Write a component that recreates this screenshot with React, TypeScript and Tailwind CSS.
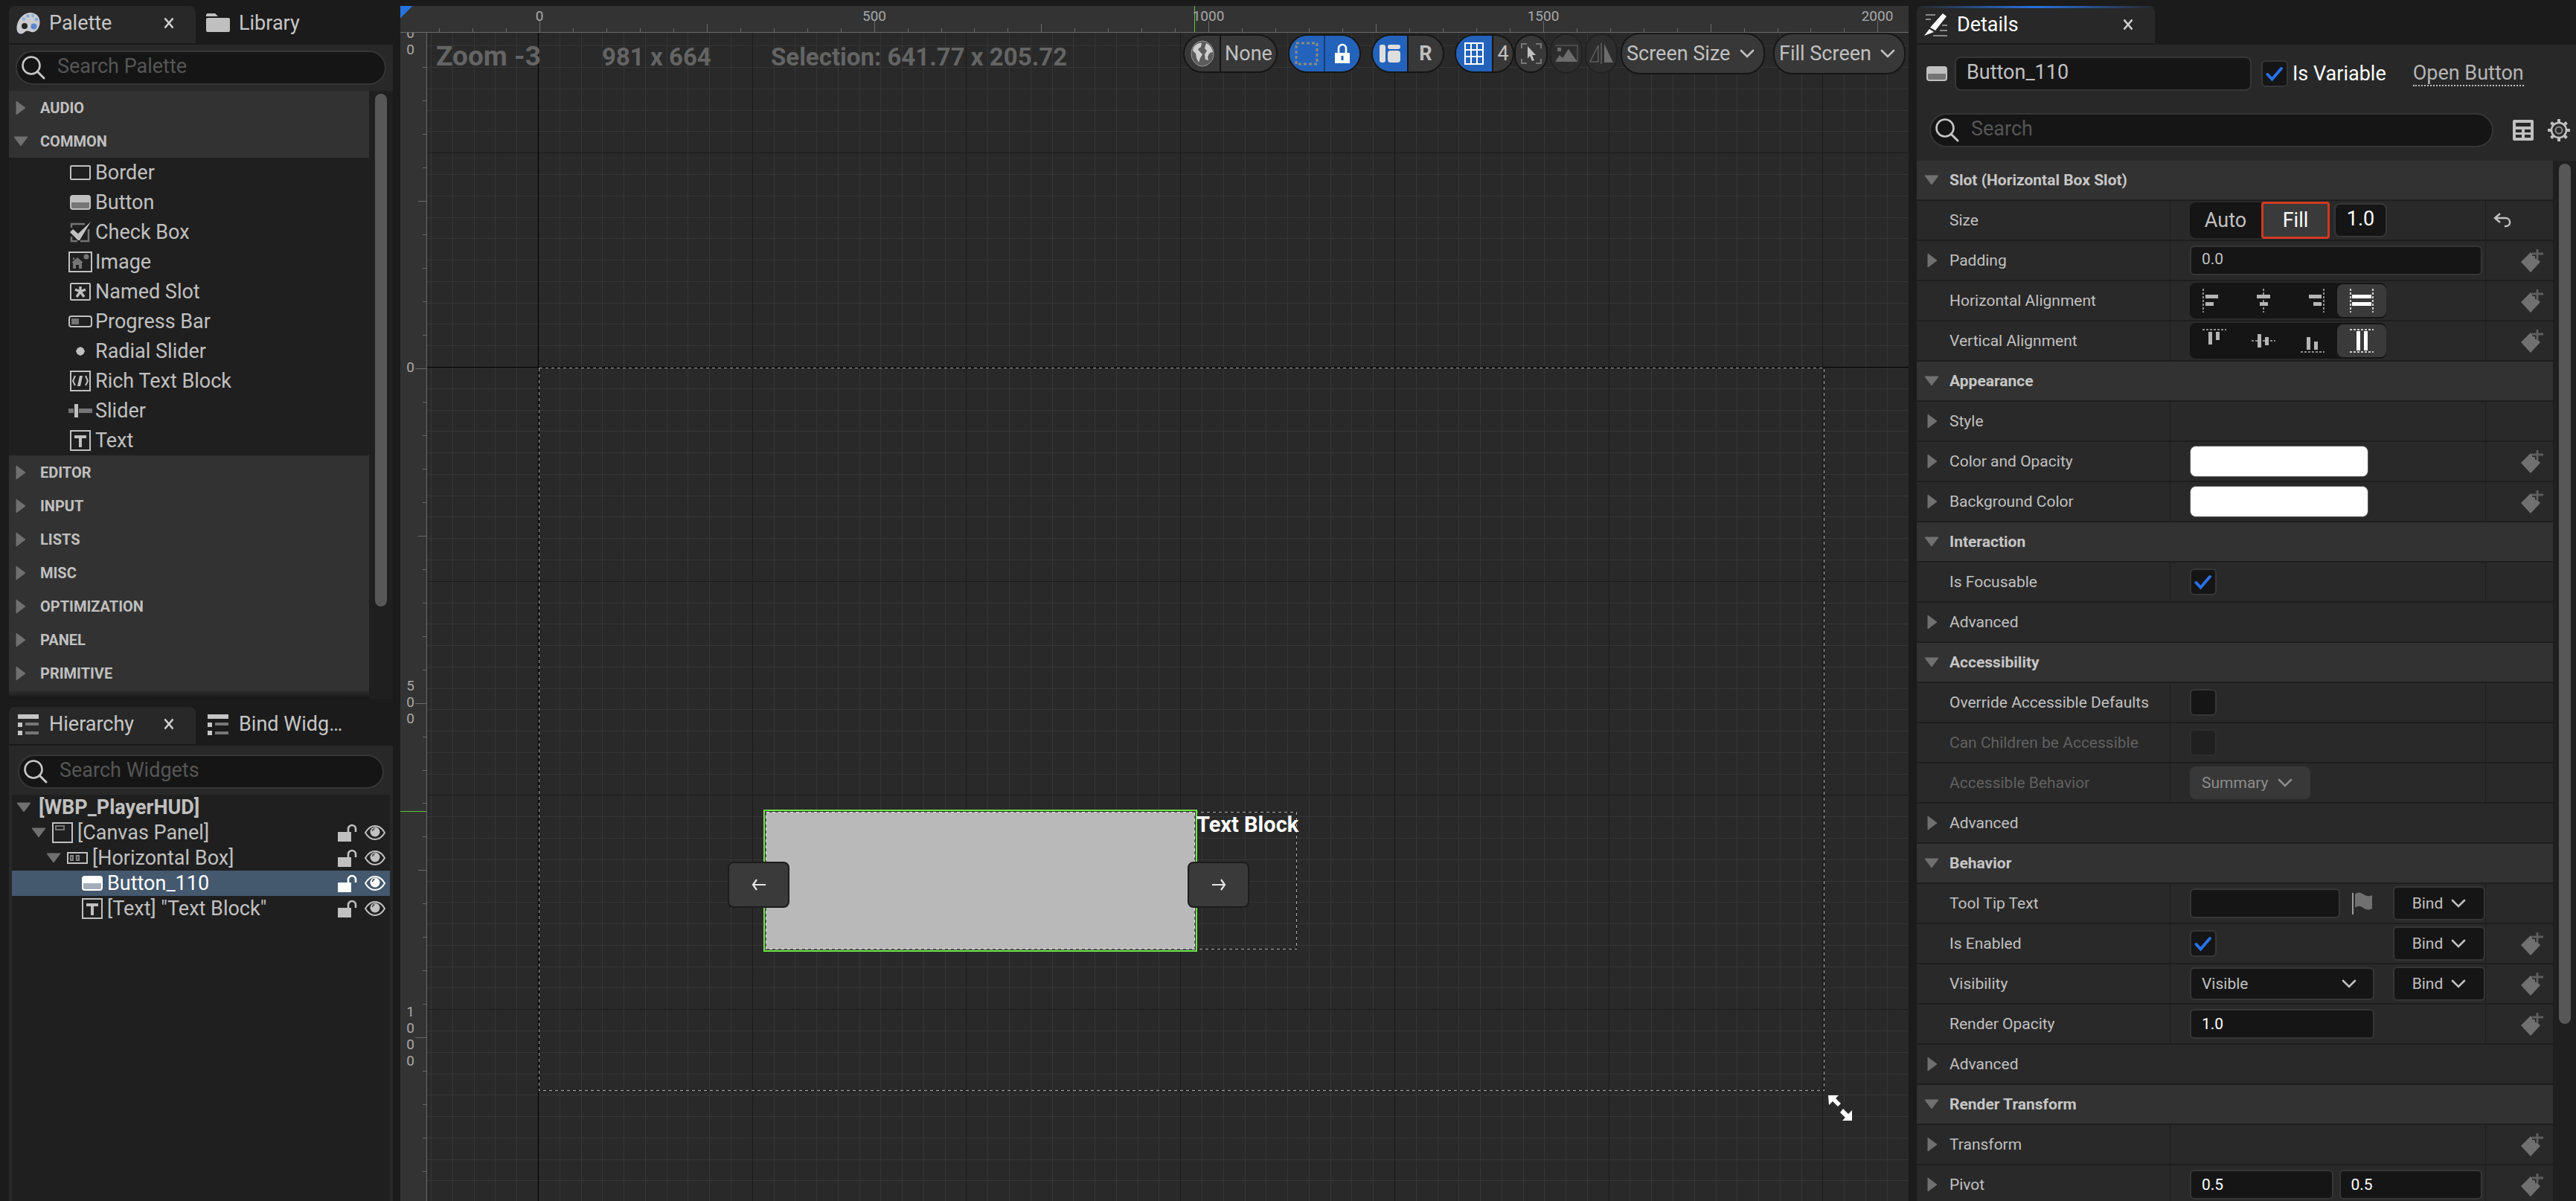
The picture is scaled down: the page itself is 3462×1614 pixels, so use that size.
import type { ReactNode } from "react";
import clsx from "clsx";

const UNIT = 0.8992; // pixels per slate unit at zoom -3
const MINOR = 50 * UNIT;
const CELL = 32 * UNIT;

function range(from: number, to: number) {
  return Array.from({ length: to - from + 1 }, (_, i) => from + i);
}

/* ---------- icons ---------- */

interface IconProps {
  className?: string;
  box?: string;
  children?: ReactNode;
}

function Icon({ className = "h-8 w-8", box = "0 0 32 32", children }: IconProps) {
  return (
    <svg className={clsx("shrink-0", className)} viewBox={box} fill="none" aria-hidden="true">
      {children}
    </svg>
  );
}

function SearchIcon() {
  return (
    <Icon>
      <circle cx="13" cy="13" r="11.5" stroke="#c6c6c6" strokeWidth="2.6" />
      <path d="M21 21l9 9" stroke="#c6c6c6" strokeWidth="3" strokeLinecap="round" />
    </Icon>
  );
}

function PaletteIcon() {
  return (
    <Icon>
      <path
        d="M19 2C9 2 1 12 .5 22c-.3 5 2 9 6 8.500 4-.5 5-4 8-4 3.500 0 5 2.500 9 1.500 5-1.500 8-7 8-13C31.500 7 26 2 19 2z"
        fill="#c9cbd0"
      />
      <circle cx="11" cy="20" r="4" fill="#262626" />
      <circle cx="23.5" cy="20.5" r="4" fill="#5b86cc" />
      <circle cx="10" cy="10.5" r="2.2" fill="#8fb2d6" />
      <circle cx="15.5" cy="6.5" r="2.2" fill="#7fa8d8" />
      <circle cx="22" cy="6" r="2.2" fill="#8fb2d6" />
      <circle cx="27" cy="11" r="2.2" fill="#7fa8d8" />
    </Icon>
  );
}

function FolderIcon() {
  return (
    <Icon>
      <path d="M0 4.500L1.500 3H12l4 4H0z" fill="#c0c0c0" />
      <rect y="9" width="32" height="19" rx="2" fill="#c0c0c0" />
    </Icon>
  );
}

function ListIcon() {
  return (
    <Icon>
      <path d="M2 3h28v6H2zM2 14h6v6H2zM2 25h6v6H2z" fill="#c6c6c6" />
      <path d="M12 14h18v4H12zM12 26h18v4H12z" fill="#777" />
    </Icon>
  );
}

function DetailsIcon() {
  return (
    <Icon>
      <path d="M2 3h13M2 9h7M24 17h7M21 24h10M12 31h19" stroke="#8a8a8a" strokeWidth="2" />
      <path d="M25 1l5 4-15 19-7-4zM7 22l6 4L0 31z" fill="#fff" />
    </Icon>
  );
}

function CloseButton({ label }: { label: string }) {
  return (
    <button type="button" aria-label={label} className="flex h-6 w-6 items-center justify-center">
      <Icon className="h-4 w-4" box="0 0 16 16">
        <path d="M2.500 1.500l11 13M13.500 1.500l-11 13" stroke="#d0d0d0" strokeWidth="2.6" />
      </Icon>
    </button>
  );
}

function ArrowDown() {
  return (
    <Icon className="h-[14px] w-5" box="0 0 20 14">
      <path d="M1 1h18l-9 12z" fill="#707070" stroke="#707070" strokeLinejoin="round" />
    </Icon>
  );
}

function ArrowRight() {
  return (
    <Icon className="h-5 w-[14px]" box="0 0 14 20">
      <path d="M1 1v18l12-9z" fill="#707070" stroke="#707070" strokeLinejoin="round" />
    </Icon>
  );
}

function Chevron({ color = "#c0c0c0" }: { color?: string }) {
  return (
    <Icon className="pointer-events-none h-5 w-5" box="0 0 20 20">
      <path d="M2 6l8 8 8-8" stroke={color} strokeWidth="2.6" strokeLinecap="round" />
    </Icon>
  );
}

function ButtonGlyph({ color = "#c0c0c0", shade = "#757575" }: { color?: string; shade?: string }) {
  return (
    <Icon>
      <rect x="2" y="6" width="28" height="20" rx="4" fill={color} />
      <path d="M4 16h24v6a2 2 0 01-2 2H6a2 2 0 01-2-2z" fill={shade} />
    </Icon>
  );
}

function TextGlyph() {
  return (
    <Icon>
      <path d="M3 3h26v26H3z" stroke="#c0c0c0" strokeWidth="2" />
      <path d="M8 9h16v4h-6v12h-4V13H8z" fill="#c0c0c0" />
    </Icon>
  );
}

const glyphs: Record<string, ReactNode> = {
  Border: (
    <Icon>
      <rect x="3" y="7" width="26" height="18" rx="1" stroke="#c0c0c0" strokeWidth="2" />
    </Icon>
  ),
  Button: <ButtonGlyph />,
  "Check Box": (
    <Icon>
      <path d="M22 5H4v5M4 22v6h8M16 28h11V12" stroke="#757575" strokeWidth="2.5" />
      <path d="M2 16l4-4 7 6L30 2 15 27h-2z" fill="#c0c0c0" />
    </Icon>
  ),
  Image: (
    <Icon>
      <path d="M1 3h30v26H1z" stroke="#c0c0c0" strokeWidth="2" />
      <path d="M4 17l8-7 8 7h-2v8h-4v-5h-4v5H6v-8zM6 10h2v3H6z" fill="#757575" />
      <circle cx="24" cy="9" r="3.5" fill="#757575" />
    </Icon>
  ),
  "Named Slot": (
    <Icon>
      <rect x="3" y="5" width="26" height="22" rx="1" stroke="#c0c0c0" strokeWidth="2" />
      <path d="M16 9v7M9 13l7 3 7-3M11 23l5-7 5 7" stroke="#c0c0c0" strokeWidth="3.4" />
    </Icon>
  ),
  "Progress Bar": (
    <Icon>
      <rect x="1" y="9" width="30" height="14" rx="3" stroke="#c0c0c0" strokeWidth="2" />
      <path d="M4 12h10v8H4z" fill="#757575" />
    </Icon>
  ),
  "Radial Slider": (
    <Icon>
      <path d="M16 10l4 2 2 4-2 4-4 2-4-2-2-4 2-4z" fill="#c0c0c0" />
    </Icon>
  ),
  "Rich Text Block": (
    <Icon>
      <path d="M3 3h26v26H3z" stroke="#c0c0c0" strokeWidth="2" />
      <path d="M9 9l-3 7 3 6M23 9l3 7-3 6" stroke="#c0c0c0" strokeWidth="2" />
      <path d="M15 9h4l-3 14h-4z" fill="#c0c0c0" />
    </Icon>
  ),
  Slider: (
    <Icon>
      <path d="M0 13h7v6H0zM14 13h18v6H14z" fill="#757575" />
      <path d="M8 7h5v18H8z" fill="#c0c0c0" />
    </Icon>
  ),
  Text: <TextGlyph />,
};

function LockOpen({ color }: { color: string }) {
  return (
    <Icon className="h-6 w-7" box="0 0 28 24">
      <path d="M1 11h18v13H1z" fill={color} />
      <path d="M15 11V7a5 5 0 0110 0v4" stroke={color} strokeWidth="2.6" />
    </Icon>
  );
}

function Eye({ color }: { color: string }) {
  return (
    <Icon className="h-6 w-7" box="0 0 28 24">
      <path d="M1 12c7-12 19-12 26 0-7 12-19 12-26 0z" stroke={color} strokeWidth="2" />
      <circle cx="14" cy="11" r="6.5" fill={color} />
      <path d="M10.500 10a4 4 0 013-3.500" stroke="#444" strokeWidth="1.4" />
    </Icon>
  );
}

/* ---------- shared pieces ---------- */

function Tab({ icon, title, active }: { icon: ReactNode; title: string; active?: boolean }) {
  return (
    <div
      className={clsx(
        "flex h-[50px] items-center rounded-t-lg pb-1",
        active ? "w-[251px] bg-[#282828] pl-[10px]" : "flex-1 pl-[14px]"
      )}
    >
      {icon}
      <span className="ml-3 flex-1 text-[27px] leading-8 text-[#c6c6c6]">{title}</span>
      {active && (
        <span className="mr-6 flex">
          <CloseButton label={"Close " + title} />
        </span>
      )}
    </div>
  );
}

function SearchBox({ label, className }: { label: string; className?: string }) {
  return (
    <label
      className={clsx(
        "flex items-center rounded-full border-2 border-[#363636] bg-[#151515] pl-[6px]",
        className
      )}
    >
      <SearchIcon />
      <input
        type="search"
        placeholder={label}
        aria-label={label}
        className="ml-4 w-full min-w-0 bg-transparent pb-1 text-[27px] leading-8 text-[#c0c0c0] outline-none placeholder:text-[#555]"
      />
    </label>
  );
}

/* ---------- left column ---------- */

const lowerCategories = ["EDITOR", "INPUT", "LISTS", "MISC", "OPTIMIZATION", "PANEL", "PRIMITIVE"];

function Category({ name, open }: { name: string; open?: boolean }) {
  return (
    <button type="button" className="flex h-[45px] w-full shrink-0 items-center bg-[#323232]">
      <span className={clsx("flex w-[42px]", open ? "pl-[6px]" : "pl-[9px]")}>
        {open ? <ArrowDown /> : <ArrowRight />}
      </span>
      <span className="text-[20px] leading-6 font-bold text-[#c0c0c0]">{name}</span>
    </button>
  );
}

function PalettePanel() {
  return (
    <section className="flex shrink-0 basis-[931px] flex-col overflow-hidden">
      <div className="flex">
        <Tab icon={<PaletteIcon />} title="Palette" active />
        <Tab icon={<FolderIcon />} title="Library" />
      </div>
      <div className="mt-[2px] bg-[#282828] px-[9px] py-2">
        <SearchBox label="Search Palette" className="h-[46px]" />
      </div>
      <div className="flex min-h-0 flex-1 bg-[#1f1f1f]">
        <div className="flex flex-1 flex-col overflow-hidden">
          <Category name="AUDIO" />
          <Category name="COMMON" open />
          <ul>
            {Object.keys(glyphs).map((name) => (
              <li key={name} className="flex h-10 items-center gap-1 pl-20 text-[27px] leading-8 text-[#c0c0c0]">
                {glyphs[name]}
                {name}
              </li>
            ))}
          </ul>
          {lowerCategories.map((name) => (
            <Category key={name} name={name} />
          ))}
          <div className="flex-1 bg-linear-to-b from-[#323232] to-[#161616]" />
        </div>
        <div className="w-8 px-2 pt-1">
          <div className="h-[689px] w-4 rounded-full bg-[#575757]" />
        </div>
      </div>
    </section>
  );
}

interface TreeRowProps {
  indent: string;
  name: string;
  icon?: ReactNode;
  open?: boolean;
  selected?: boolean;
  root?: boolean;
}

function TreeRow({ indent, name, icon, open, selected, root }: TreeRowProps) {
  const color = selected ? "#ffffff" : "#c0c0c0";
  return (
    <li
      className={clsx(
        "flex h-[34px] items-center pr-[6px] text-[27px] leading-8",
        indent,
        selected ? "bg-[#44586e] text-white" : "text-[#c0c0c0]"
      )}
    >
      <span className="flex w-[26px] shrink-0">{open && <ArrowDown />}</span>
      {icon}
      <span className={clsx("flex-1 pl-1 whitespace-nowrap", root && "font-bold")}>{name}</span>
      {!root && (
        <span className="flex gap-[9px]">
          <button type="button" aria-label={"Lock " + name}>
            <LockOpen color={color} />
          </button>
          <button type="button" aria-label={"Toggle visibility of " + name}>
            <Eye color={color} />
          </button>
        </span>
      )}
    </li>
  );
}

function HierarchyPanel() {
  return (
    <section className="flex min-h-0 flex-1 flex-col">
      <div className="flex">
        <Tab icon={<ListIcon />} title="Hierarchy" active />
        <Tab icon={<ListIcon />} title="Bind Widg…" />
      </div>
      <div className="mt-[2px] flex flex-1 flex-col bg-[#282828] px-1 pt-3">
        <SearchBox label="Search Widgets" className="mx-2 h-[46px]" />
        <ul className="mt-2 flex-1 bg-[#1f1f1f]">
          <TreeRow indent="pl-[6px]" name="[WBP_PlayerHUD]" open root />
          <TreeRow
            indent="pl-[26px]"
            name="[Canvas Panel]"
            open
            icon={
              <Icon>
                <path d="M3 3h26v26H3z" stroke="#c0c0c0" strokeWidth="2" />
                <path d="M7 7h11v5H7z" stroke="#757575" strokeWidth="2" />
              </Icon>
            }
          />
          <TreeRow
            indent="pl-[46px]"
            name="[Horizontal Box]"
            open
            icon={
              <Icon>
                <path d="M3 9h26v14H3z" stroke="#c0c0c0" strokeWidth="2" />
                <path d="M7 13h3v6H7zM15 13h3v6h-3z" stroke="#858585" strokeWidth="2" />
              </Icon>
            }
          />
          <TreeRow
            indent="pl-[66px]"
            name="Button_110"
            selected
            icon={<ButtonGlyph color="#ffffff" shade="#a3adba" />}
          />
          <TreeRow indent="pl-[66px]" name={'[Text] "Text Block"'} icon={<TextGlyph />} />
        </ul>
      </div>
    </section>
  );
}

/* ---------- designer ---------- */

function tickSize(i: number) {
  if (i % 10 === 0) return 15;
  return i % 5 === 0 ? 11 : 5;
}

function TopRuler() {
  return (
    <div className="relative col-span-2 overflow-hidden border-b border-[#6a6a6a] bg-[#333]">
      <svg className="absolute h-full w-full" shapeRendering="crispEdges" aria-hidden="true">
        <path d="M0 0h16L0 16z" fill="#2872e0" />
        {range(-3, 60).map((i) => {
          const x = Math.round(187 + i * MINOR);
          return <path key={i} d={`M${x}.5 ${35 - tickSize(i)}V35`} stroke="#6a6a6a" />;
        })}
        <path d="M1067.500 0V35" stroke="#5ac83a" />
      </svg>
      {[0, 500, 1000, 1500, 2000].map((n) => (
        <span
          key={n}
          className="absolute top-1 w-16 -translate-x-1/2 text-center text-[19px] leading-5 text-[#a8a8a8]"
          style={{ left: Math.round(187 + n * UNIT) }}
        >
          {n}
        </span>
      ))}
    </div>
  );
}

const sideLabels = [
  { digits: "00", y: 12 },
  { digits: "0", y: 450 },
  { digits: "500", y: 900 },
  { digits: "1000", y: 1349 },
];

function SideRuler() {
  return (
    <div className="relative overflow-hidden border-r border-[#6a6a6a] bg-[#333]">
      <svg className="absolute h-full w-full" shapeRendering="crispEdges" aria-hidden="true">
        {range(-9, 40).map((i) => {
          const y = Math.round(451 + i * MINOR);
          return <path key={i} d={`M${35 - tickSize(i)} ${y}.5H35`} stroke="#6a6a6a" />;
        })}
        <path d="M0 1046.500H35" stroke="#5ac83a" />
      </svg>
      {sideLabels.map(({ digits, y }) => (
        <div
          key={y}
          className="absolute left-2 w-[11px] -translate-y-1/2 text-center text-[19px] leading-[22px] text-[#a8a8a8]"
          style={{ top: y }}
        >
          {digits.split("").map((digit, i) => (
            <div key={i}>{digit}</div>
          ))}
        </div>
      ))}
    </div>
  );
}

function GridLines() {
  const stroke = (i: number) => (i === 0 ? "#000" : i % 10 === 0 ? "#1b1b1b" : "#363636");
  // majors go last so they stay on top of the minor lines
  const order = (a: number, b: number) => Number(a % 10 === 0) - Number(b % 10 === 0);
  return (
    <svg className="absolute h-full w-full" shapeRendering="crispEdges" fill="none" aria-hidden="true">
      {range(-15, 90).sort(order).map((i) => (
        <g key={i} stroke={stroke(i)}>
          <path d={`M${Math.round(149 + i * CELL)}.5 0V4000`} />
          <path d={`M0 ${Math.round(449 + i * CELL)}.5H6000`} />
        </g>
      ))}
      {[
        [150, 450, 1727, 971],
        [455, 1047, 713, 184],
      ].map(([x, y, w, h]) => (
        <g key={x}>
          <rect x={x + 0.5} y={y + 0.5} width={w} height={h} stroke="#161616" />
          <rect x={x + 0.5} y={y + 0.5} width={w} height={h} stroke="#a9a9a9" strokeDasharray="4 4" />
        </g>
      ))}
    </svg>
  );
}

const pill = "flex overflow-hidden rounded-[26px] border-2 border-[#161616] bg-[#383838]";
const cell = "flex flex-1 items-center justify-center";

function Toolbar() {
  return (
    <div className="absolute top-0 right-1 flex items-center text-[27px] leading-8 text-[#c0c0c0]">
      <div className={clsx(pill, "mr-[14px] h-[52px] w-[127px]")}>
        <button
          type="button"
          aria-label="Localization preview"
          className="flex w-[49px] items-center justify-center border-r-2 border-[#161616]"
        >
          <Icon className="h-9 w-8" box="0 0 32 36">
            <ellipse cx="16" cy="18" rx="15" ry="17" fill="#5c5c5c" stroke="#9a9a9a" />
            <path
              d="M4 10c3-5 8-7 11-6l-1 5-4 3 3 4 3 3-3 5-2 6-3-6-1-6-4-4zM21 4c5 2 8 7 9 12l-4 1-3 5 1 5-4-1-1-7 3-5-3-3z"
              fill="#cfcfcf"
            />
          </Icon>
        </button>
        <button type="button" className={cell}>None</button>
      </div>
      <div className={clsx(pill, "mr-[14px] h-[52px] w-[98px]")}>
        <button type="button" aria-label="Show outlines" className={clsx(cell, "border-r-2 border-[#163c78] bg-[#2463bc]")}>
          <Icon>
            <rect x="2" y="2" width="28" height="28" stroke="#8d8a80" strokeWidth="3" strokeDasharray="4 3" />
          </Icon>
        </button>
        <button type="button" aria-label="Respect locks" className={clsx(cell, "bg-[#2463bc]")}>
          <Icon className="h-7 w-6" box="0 0 24 28">
            <path d="M7 13V7a5 5 0 0110 0v6" stroke="#fff" strokeWidth="2.6" />
            <path fillRule="evenodd" d="M2 13h20v14H2zm8.500 4v6h3v-6z" fill="#fff" />
          </Icon>
        </button>
      </div>
      <div className={clsx(pill, "mr-[14px] h-[52px] w-[98px]")}>
        <button type="button" aria-label="Layout transform" className={clsx(cell, "border-r-2 border-[#161616] bg-[#2463bc]")}>
          <Icon className="h-7 w-8" box="0 0 32 28">
            <rect x="2" y="2" width="8" height="24" rx="3" fill="#dedede" />
            <rect x="13" y="2" width="17" height="6" rx="3" fill="#dedede" />
            <rect x="13" y="10" width="17" height="16" rx="4" fill="#dedede" />
          </Icon>
        </button>
        <button type="button" className={clsx(cell, "font-bold")}>R</button>
      </div>
      <div className={clsx(pill, "h-[52px] w-[80px]")}>
        <button
          type="button"
          aria-label="Grid snapping"
          className="flex w-[50px] items-center justify-center border-r-2 border-[#161616] bg-[#2463bc]"
        >
          <Icon className="h-8 w-7" box="0 0 28 32">
            <path d="M2 2h24v28H2zM10 2v28M18 2v28M2 11h24M2 20h24" stroke="#fff" strokeWidth="2" />
          </Icon>
        </button>
        <button type="button" className={cell}>4</button>
      </div>
      <button type="button" aria-label="Select widget" className={clsx(pill, "h-[52px] w-[45px] items-center justify-center")}>
        <Icon className="h-7 w-7" box="0 0 28 28">
          <path d="M1 7V1h7M20 1h7v6M27 21v6h-7M8 27H1v-6" stroke="#777" strokeWidth="2" />
          <path d="M9 4l11 12h-5l3 7-3 1-3-7-3 4z" fill="#c0c0c0" />
        </Icon>
      </button>
      <button
        type="button"
        disabled
        aria-label="Preview background"
        className="mx-[3px] flex h-[54px] w-11 items-center justify-center rounded-[24px] border-2 border-[#222] bg-[#2d2d2d]"
      >
        <Icon className="h-6 w-8" box="0 0 32 24">
          <path d="M1 1h30v22" stroke="#555" strokeWidth="1.5" />
          <path d="M1 23l6-9 4 4 8-12 12 17zM4 4h5v5H4z" fill="#6c6c6c" />
        </Icon>
      </button>
      <button
        type="button"
        disabled
        aria-label="Flow direction"
        className="flex h-[54px] w-11 items-center justify-center rounded-[24px] border-2 border-[#222] bg-[#2d2d2d]"
      >
        <Icon className="h-7 w-8" box="0 0 32 28">
          <path d="M12 3v22H1zM16 0v28" stroke="#606060" strokeWidth="1.5" />
          <path d="M20 1v25h12z" fill="#6c6c6c" />
        </Icon>
      </button>
      <button
        type="button"
        className={clsx(pill, "ml-1 h-[56px] w-[194px] items-center justify-between pr-3 pl-[6px] whitespace-nowrap")}
      >
        Screen Size
        <Chevron />
      </button>
      <button
        type="button"
        className={clsx(pill, "ml-[11px] h-[56px] w-[178px] items-center justify-between pr-3 pl-[6px] whitespace-nowrap")}
      >
        Fill Screen
        <Chevron />
      </button>
    </div>
  );
}

function SlotArrow({ label, left, children }: { label: string; left?: boolean; children: ReactNode }) {
  return (
    <button
      type="button"
      aria-label={label}
      className={clsx(
        "absolute top-[1114px] flex h-[62px] w-[83px] items-center justify-center rounded-lg border-2 border-[#1c1c1c] bg-[#3a3a3a]",
        left ? "left-[404px]" : "left-[1022px]"
      )}
    >
      <Icon className="h-4 w-5" box="0 0 20 16">
        {children}
      </Icon>
    </button>
  );
}

function SelectedWidget() {
  return (
    <div className="absolute top-[1044px] left-[452px] h-[191px] w-[583px] border-2 border-[#6dea48] bg-[#b9b9b9]">
      <svg className="h-full w-full" fill="none" shapeRendering="crispEdges" aria-hidden="true">
        <rect x="0.5" y="0.5" width="578" height="186" stroke="#333" />
        <rect x="1.5" y="1.5" width="576" height="184" stroke="#666" />
        <rect x="1.5" y="1.5" width="576" height="184" stroke="#eee" strokeDasharray="4 4" />
      </svg>
    </div>
  );
}

function Designer() {
  return (
    <main className="mt-2 grid min-w-0 flex-1 grid-cols-[36px_1fr] grid-rows-[36px_1fr]">
      <TopRuler />
      <SideRuler />
      <div className="relative overflow-hidden bg-[#292929]">
        <GridLines />
        <SelectedWidget />
        <div className="absolute top-[1046px] left-[1034px] text-[29px] leading-9 font-bold whitespace-nowrap text-white">
          Text Block
        </div>
        <SlotArrow label="Move left" left>
          <path d="M19 8H3M7 1L2 8l5 7" stroke="#e6e6e6" strokeWidth="2.2" />
        </SlotArrow>
        <SlotArrow label="Move right">
          <path d="M1 8h16M13 1l5 7-5 7" stroke="#e6e6e6" strokeWidth="2.2" />
        </SlotArrow>
        <div className="absolute top-2 left-3 flex items-baseline font-bold whitespace-nowrap text-[#646464]">
          <span className="w-[223px] text-[37px] leading-[48px]">Zoom -3</span>
          <span className="w-[227px] text-[33px]">981 x 664</span>
          <span className="text-[33px]">Selection: 641.77 x 205.72</span>
        </div>
        <Toolbar />
        <svg className="absolute top-[1427px] left-[1882px] h-9 w-9" viewBox="0 0 36 36" aria-hidden="true">
          <path d="M1 1h14l-4 4 7 7-4 4-7-7-5 5zM21 19l7 7 5-5v14H20l4-4-7-7z" fill="#fff" />
        </svg>
      </div>
    </main>
  );
}

/* ---------- details ---------- */

const field =
  "rounded-md border-2 border-[#363636] bg-[#151515] text-[21px] leading-6 outline-none min-w-0";

function SectionRow({ title }: { title: string }) {
  return (
    <button type="button" className="flex h-[54px] w-full items-center border-b-2 border-[#1e1e1e] bg-[#323232] pl-[10px]">
      <ArrowDown />
      <span className="pl-[14px] text-[21px] leading-6 font-bold text-[#c6c6c6]">{title}</span>
    </button>
  );
}

function AdvancedRow() {
  return (
    <button type="button" className="flex h-[54px] w-full items-center border-b-2 border-[#1e1e1e] pl-[14px]">
      <ArrowRight />
      <span className="pl-4 text-[21px] leading-6 text-[#c0c0c0]">Advanced</span>
    </button>
  );
}

function KeyButton({ name }: { name: string }) {
  return (
    <button type="button" aria-label={"Add keyframe for " + name}>
      <Icon>
        <path d="M14 5l13 13-13 14L1 18z" fill="#707070" />
        <path d="M23 1v13M16 7h15" stroke="#292929" strokeWidth="6" />
        <path d="M23 1v13M16 7h15" stroke="#5e5e5e" strokeWidth="3" />
      </Icon>
    </button>
  );
}

interface PropRowProps {
  label: string;
  id?: string;
  arrow?: boolean;
  dim?: boolean;
  keyed?: boolean;
  action?: ReactNode;
  children?: ReactNode;
}

function PropRow({ label, id, arrow, dim, keyed, action, children }: PropRowProps) {
  return (
    <div className="flex h-[54px] border-b-2 border-[#1e1e1e]">
      <div className="flex w-[341px] shrink-0 items-center border-r border-[#1e1e1e] pl-[14px]">
        <span className="w-[30px]">{arrow && <ArrowRight />}</span>
        <label
          htmlFor={id}
          className={clsx("text-[21px] leading-6 whitespace-nowrap", dim ? "text-[#606060]" : "text-[#c0c0c0]")}
        >
          {label}
        </label>
      </div>
      <div className="flex min-w-0 flex-1 items-center border-r border-[#1e1e1e] pl-[26px]">{children}</div>
      <div className="flex w-[90px] shrink-0 items-center">
        {action}
        {keyed && (
          <span className="ml-auto flex pr-3">
            <KeyButton name={label} />
          </span>
        )}
      </div>
    </div>
  );
}

function Check({ id, on, disabled }: { id?: string; on?: boolean; disabled?: boolean }) {
  return (
    <span className={clsx("grid h-9 w-9 shrink-0 place-items-center", disabled && "opacity-40")}>
      <input
        id={id}
        type="checkbox"
        defaultChecked={on}
        disabled={disabled}
        className="col-start-1 row-start-1 h-9 w-9 appearance-none rounded-md border-2 border-[#363636] bg-[#151515]"
      />
      {on && (
        <Icon className="pointer-events-none col-start-1 row-start-1 h-6 w-6" box="0 0 24 24">
          <path d="M2.500 13l6 6.500L21 5" stroke="#2872e8" strokeWidth="4" strokeLinecap="round" />
        </Icon>
      )}
    </span>
  );
}

function BindButton() {
  return (
    <button
      type="button"
      className={clsx(field, "ml-auto flex h-[46px] w-[124px] items-center justify-center gap-[11px] text-[#c0c0c0]")}
    >
      Bind
      <Chevron />
    </button>
  );
}

function AlignButton({ label, on, children }: { label: string; on?: boolean; children: ReactNode }) {
  return (
    <button
      type="button"
      aria-label={label}
      className={clsx(
        "flex h-11 w-[66px] items-center justify-center rounded-lg",
        on ? "bg-[#3a3a3a] text-white" : "text-[#b5b5b5]"
      )}
    >
      <Icon>{children}</Icon>
    </button>
  );
}

const dash = { stroke: "currentColor", strokeWidth: 1.5, strokeDasharray: "3 2" };

function DetailsPanel() {
  return (
    <aside className="mt-2 ml-[11px] flex w-[886px] shrink-0 flex-col overflow-hidden">
      <div className="flex h-[50px] w-[320px] shrink-0 flex-col rounded-t-lg bg-[#282828]">
        <div className="h-[3px] bg-linear-to-r from-transparent via-[#2872e0] to-transparent" />
        <div className="flex flex-1 items-center pb-1 pl-[10px]">
          <DetailsIcon />
          <span className="flex-1 pl-3 text-[27px] leading-8 text-white">Details</span>
          <span className="mr-6 flex">
            <CloseButton label="Close Details" />
          </span>
        </div>
      </div>

      <div className="mt-[2px] shrink-0 bg-[#282828]">
        <div className="flex h-[78px] items-center pl-[11px]">
          <ButtonGlyph />
          <input
            aria-label="Widget name"
            defaultValue="Button_110"
            className="ml-2 h-[46px] w-[399px] rounded-lg border-2 border-[#363636] bg-[#151515] pb-1 pl-[14px] text-[27px] leading-8 text-[#c0c0c0] outline-none"
          />
          <label htmlFor="is-variable" className="ml-[13px] flex items-center gap-[6px] text-[27px] leading-8 text-white">
            <Check id="is-variable" on />
            Is Variable
          </label>
          <a href="#button" className="ml-9 border-b-2 border-dotted border-[#c0c0c0] text-[27px] leading-8 text-[#b5b5b5]">
            Open Button
          </a>
        </div>
        <div className="flex h-[78px] items-center pb-1 pl-[17px]">
          <SearchBox label="Search" className="h-[46px] w-[758px]" />
          <button type="button" aria-label="Property matrix" className="ml-6">
            <Icon>
              <path
                fillRule="evenodd"
                d="M4 2h24a2 2 0 012 2v24a2 2 0 01-2 2H4a2 2 0 01-2-2V4a2 2 0 012-2zm2 4v5h20V6zm0 9v4h8v-4zm12 0v4h8v-4zM6 22v4h8v-4zm12 0v4h8v-4z"
                fill="#c0c0c0"
              />
            </Icon>
          </button>
          <button type="button" aria-label="Settings" className="ml-4">
            <Icon>
              <circle cx="16" cy="16" r="10" stroke="#c0c0c0" strokeWidth="2.6" />
              <circle cx="16" cy="16" r="4.5" stroke="#8a8a8a" strokeWidth="2" />
              <path
                d="M16 1v5M16 26v5M1 16h5M26 16h5M5.500 5.500L9 9M23 23l3.500 3.500M26.500 5.500L23 9M9 23l-3.500 3.500"
                stroke="#c0c0c0"
                strokeWidth="4"
              />
            </Icon>
          </button>
        </div>
      </div>

      <div className="flex min-h-0 flex-1 bg-[#1f1f1f]">
        <div className="min-w-0 flex-1 self-start bg-[#292929]">
          <SectionRow title="Slot (Horizontal Box Slot)" />
          <PropRow
            label="Size"
            action={
              <button type="button" aria-label="Reset to default" className="ml-[10px]">
                <Icon className="h-5 w-6" box="0 0 24 20">
                  <path d="M9 1L2 7l7 6M2 7h14c8 0 8 11 1 11h-2" stroke="#c0c0c0" strokeWidth="2.4" />
                </Icon>
              </button>
            }
          >
            <div className="flex h-12 items-center rounded-lg bg-[#151515] text-[27px] leading-8">
              <button type="button" className="w-24 text-[#c0c0c0]">Auto</button>
              <button type="button" className="h-[50px] w-[92px] rounded-sm border-3 border-[#cf3a22] bg-[#3a3a3a] text-white">
                Fill
              </button>
            </div>
            <input
              aria-label="Fill size"
              defaultValue="1.0"
              className="ml-[6px] h-[46px] w-[71px] rounded-lg border-2 border-[#363636] bg-[#151515] pb-1 text-center text-[27px] leading-8 text-white outline-none"
            />
          </PropRow>
          <PropRow label="Padding" id="padding" arrow keyed>
            <input id="padding" defaultValue="0.0" className={clsx(field, "mr-1 h-10 flex-1 pb-1 pl-[14px] text-[#c0c0c0]")} />
          </PropRow>
          <PropRow label="Horizontal Alignment" keyed>
            <div className="flex h-12 items-center rounded-lg bg-[#151515]">
              <AlignButton label="Align left">
                <path d="M1 0v32" {...dash} />
                <path d="M4 8h17v5H4zM4 18h11v5H4z" fill="currentColor" />
              </AlignButton>
              <AlignButton label="Align center">
                <path d="M16 0v32" {...dash} />
                <path d="M7 8h18v5H7zM11 18h11v5H11z" fill="currentColor" />
              </AlignButton>
              <AlignButton label="Align right">
                <path d="M31 0v32" {...dash} />
                <path d="M11 8h17v5H11zM17 18h11v5H17z" fill="currentColor" />
              </AlignButton>
              <AlignButton label="Fill horizontally" on>
                <path d="M1 0v32M31 0v32" {...dash} />
                <path d="M3 8h26v5H3zM3 18h26v5H3z" fill="currentColor" />
              </AlignButton>
            </div>
          </PropRow>
          <PropRow label="Vertical Alignment" keyed>
            <div className="flex h-12 items-center rounded-lg bg-[#151515]">
              <AlignButton label="Align top">
                <path d="M0 1h32" {...dash} />
                <path d="M8 4h5v17H8zM18 4h5v11h-5z" fill="currentColor" />
              </AlignButton>
              <AlignButton label="Align middle">
                <path d="M0 16h32" {...dash} />
                <path d="M8 7h5v18H8zM18 11h5v11h-5z" fill="currentColor" />
              </AlignButton>
              <AlignButton label="Align bottom">
                <path d="M0 31h32" {...dash} />
                <path d="M8 11h5v17H8zM18 17h5v11h-5z" fill="currentColor" />
              </AlignButton>
              <AlignButton label="Fill vertically" on>
                <path d="M0 1h32M0 31h32" {...dash} />
                <path d="M9 3h5v26H9zM19 3h5v26h-5z" fill="currentColor" />
              </AlignButton>
            </div>
          </PropRow>

          <SectionRow title="Appearance" />
          <PropRow label="Style" arrow />
          <PropRow label="Color and Opacity" arrow keyed>
            <button type="button" aria-label="Color and Opacity" className="h-[42px] w-[240px] rounded-lg border border-[#555] bg-white" />
          </PropRow>
          <PropRow label="Background Color" arrow keyed>
            <button type="button" aria-label="Background Color" className="h-[42px] w-[240px] rounded-lg border border-[#555] bg-white" />
          </PropRow>

          <SectionRow title="Interaction" />
          <PropRow label="Is Focusable" id="focusable">
            <Check id="focusable" on />
          </PropRow>
          <AdvancedRow />

          <SectionRow title="Accessibility" />
          <PropRow label="Override Accessible Defaults" id="override">
            <Check id="override" />
          </PropRow>
          <PropRow label="Can Children be Accessible" id="children" dim>
            <Check id="children" disabled />
          </PropRow>
          <PropRow label="Accessible Behavior" id="behavior" dim>
            <div className="grid w-[162px] items-center">
              <select
                id="behavior"
                disabled
                className="col-start-1 row-start-1 h-11 w-full appearance-none rounded-lg bg-[#383838] pl-4 text-[21px] leading-6 text-[#8c8c8c] opacity-100"
              >
                <option>Summary</option>
              </select>
              <span className="pointer-events-none col-start-1 row-start-1 justify-self-end pr-6">
                <Chevron color="#8c8c8c" />
              </span>
            </div>
          </PropRow>
          <AdvancedRow />

          <SectionRow title="Behavior" />
          <PropRow label="Tool Tip Text" id="tooltip">
            <input id="tooltip" className={clsx(field, "h-10 w-[202px]")} />
            <button type="button" aria-label="Localization options" className="ml-4">
              <Icon>
                <path d="M1 2v29" stroke="#c0c0c0" strokeWidth="1.5" />
                <path d="M4 4c6-6 11 1 16 2 3 .5 5 0 7-1v18c-6 3-9 1-12-1-4-3-7-3-11 0z" fill="#707070" />
              </Icon>
            </button>
            <BindButton />
          </PropRow>
          <PropRow label="Is Enabled" id="enabled" keyed>
            <Check id="enabled" on />
            <BindButton />
          </PropRow>
          <PropRow label="Visibility" id="visibility" keyed>
            <div className="grid w-[248px] items-center">
              <select
                id="visibility"
                className={clsx(field, "col-start-1 row-start-1 h-11 w-full appearance-none pl-[14px] text-[#c0c0c0]")}
              >
                <option>Visible</option>
              </select>
              <span className="pointer-events-none col-start-1 row-start-1 justify-self-end pr-6">
                <Chevron />
              </span>
            </div>
            <BindButton />
          </PropRow>
          <PropRow label="Render Opacity" id="opacity" keyed>
            <input id="opacity" defaultValue="1.0" className={clsx(field, "h-10 w-[248px] pl-[14px] text-white")} />
          </PropRow>
          <AdvancedRow />

          <SectionRow title="Render Transform" />
          <PropRow label="Transform" arrow keyed />
          <PropRow label="Pivot" id="pivot-x" arrow keyed>
            <input id="pivot-x" defaultValue="0.5" className={clsx(field, "h-10 flex-1 pl-[14px] text-white")} />
            <input aria-label="Pivot Y" defaultValue="0.5" className={clsx(field, "mr-1 ml-2 h-10 flex-1 pl-[14px] text-white")} />
          </PropRow>
        </div>
        <div className="w-[31px] pt-1 pl-2">
          <div className="h-[1156px] w-4 rounded-full bg-[#575757]" />
        </div>
      </div>
    </aside>
  );
}

export default function App() {
  return (
    <div className="flex h-screen w-full overflow-hidden bg-[#1b1b1b] pl-3 font-['Roboto',sans-serif]">
      <div className="mr-[10px] flex w-[516px] shrink-0 flex-col gap-[11px] pt-2">
        <PalettePanel />
        <HierarchyPanel />
      </div>
      <Designer />
      <DetailsPanel />
    </div>
  );
}
